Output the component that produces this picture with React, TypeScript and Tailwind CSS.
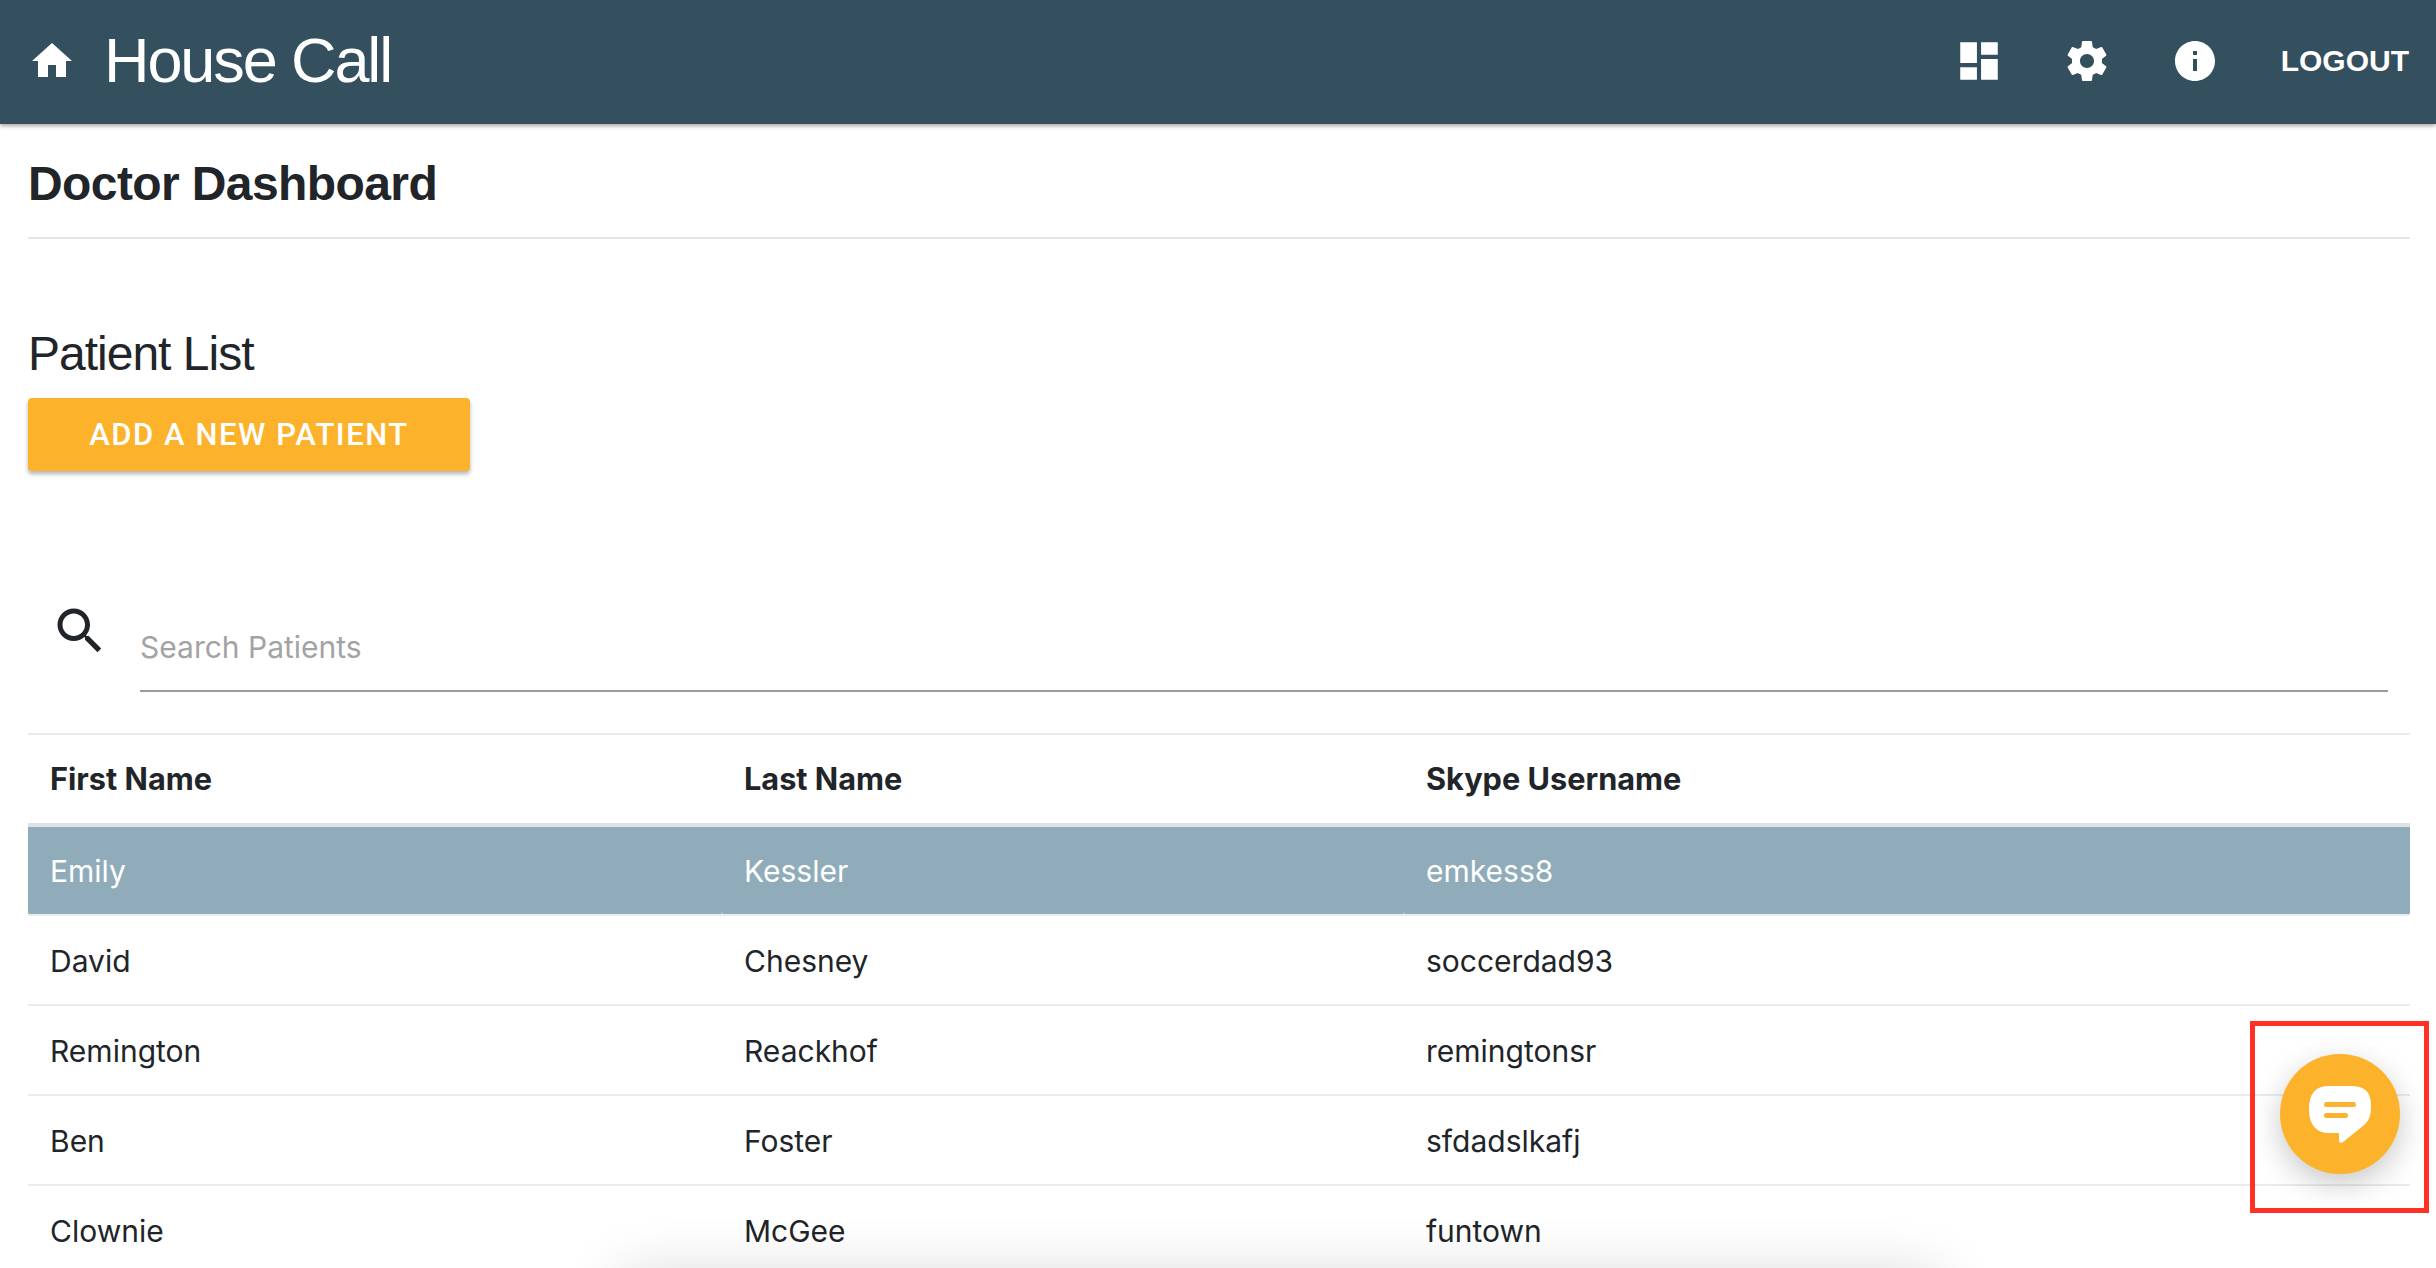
import React from 'react';

const patients = [
  { first: 'Emily', last: 'Kessler', skype: 'emkess8', selected: true },
  { first: 'David', last: 'Chesney', skype: 'soccerdad93' },
  { first: 'Remington', last: 'Reackhof', skype: 'remingtonsr' },
  { first: 'Ben', last: 'Foster', skype: 'sfdadslkafj' },
  { first: 'Clownie', last: 'McGee', skype: 'funtown' },
];

const App: React.FC = () => {
  return (
    <div className="relative h-[1268px] overflow-hidden bg-white font-['Liberation_Sans',sans-serif] text-[#212529]">
      <header className="relative z-10 flex h-[124px] items-center bg-[#34505e] pl-[34px] pr-[27px] text-white shadow-[0_2px_4px_rgba(0,0,0,0.35)]">
        <svg viewBox="0 0 24 24" className="ml-[-6px] mb-[2px] h-[48px] w-[48px] fill-white">
          <path d="M10 20v-6h4v6h5v-8h3L12 3 2 12h3v8z" />
        </svg>
        <span className="mb-[3px] ml-[28px] text-[63px] leading-none tracking-[-2.1px]">House Call</span>
        <div className="mb-[2px] ml-auto flex items-center">
          <svg viewBox="0 0 24 24" className="h-[50px] w-[50px] fill-white">
            <path d="M3 13h8V3H3v10zm0 8h8v-6H3v6zm10 0h8V11h-8v10zm0-18v6h8V3h-8z" />
          </svg>
          <svg viewBox="0 0 24 24" className="ml-[59px] h-[48px] w-[48px] fill-white">
            <path d="M19.43 12.98c.04-.32.07-.64.07-.98s-.03-.66-.07-.98l2.11-1.65c.19-.15.24-.42.12-.64l-2-3.46c-.12-.22-.39-.3-.61-.22l-2.49 1c-.52-.4-1.08-.73-1.69-.98l-.38-2.65C14.46 2.18 14.25 2 14 2h-4c-.25 0-.46.18-.49.42l-.38 2.65c-.61.25-1.17.59-1.69.98l-2.49-1c-.23-.09-.49 0-.61.22l-2 3.46c-.13.22-.07.49.12.64l2.11 1.65c-.04.32-.07.65-.07.98s.03.66.07.98l-2.11 1.65c-.19.15-.24.42-.12.64l2 3.46c.12.22.39.3.61.22l2.49-1c.52.4 1.08.73 1.69.98l.38 2.65c.03.24.24.42.49.42h4c.25 0 .46-.18.49-.42l.38-2.65c.61-.25 1.17-.59 1.69-.98l2.49 1c.23.09.49 0 .61-.22l2-3.46c.12-.22.07-.49-.12-.64l-2.11-1.65zM12 15.5c-1.93 0-3.5-1.57-3.5-3.5s1.57-3.5 3.5-3.5 3.5 1.57 3.5 3.5-1.57 3.5-3.5 3.5z" />
          </svg>
          <svg viewBox="0 0 24 24" className="ml-[60px] h-[48px] w-[48px] fill-white">
            <path d="M12 2C6.48 2 2 6.48 2 12s4.48 10 10 10 10-4.48 10-10S17.52 2 12 2zm1 15h-2v-6h2v6zm0-8h-2V7h2v2z" />
          </svg>
          <span className="ml-[62px] text-[30px] font-bold leading-none">LOGOUT</span>
        </div>
      </header>

      <main className="pl-[28px] pr-[26px]">
        <h1 className="flex h-[115px] items-center border-b-2 border-[#e5e5e5] pt-[6px] text-[48px] font-bold tracking-[-0.6px]">
          Doctor Dashboard
        </h1>
        <h2 className="mt-[87px] text-[48px] leading-[56px] tracking-[-1px]">Patient List</h2>
        <button className="mt-[16px] block h-[73px] w-[442px] rounded-[4px] bg-[#fdb22c] pt-[2px] font-['Roboto',sans-serif] text-[31px] font-medium tracking-[1.55px] text-white shadow-[0_3px_4px_rgba(0,0,0,0.3)]">
          ADD A NEW PATIENT
        </button>

        <div className="mt-[131px] flex h-[133px] items-start border-b-2 border-[#e9ecef] px-[22px]">
          <svg viewBox="0 0 24 24" className="mt-[-1px] h-[60px] w-[60px] shrink-0 fill-[#212529]">
            <path d="M15.5 14h-.79l-.28-.27C15.41 12.59 16 11.11 16 9.5 16 5.91 13.09 3 9.5 3S3 5.91 3 9.5 5.91 16 9.5 16c1.61 0 3.09-.59 4.23-1.57l.27.28v.79l5 4.99L20.49 19l-4.99-5zm-6 0C7.01 14 5 11.99 5 9.5S7.01 5 9.5 5 14 7.01 14 9.5 11.99 14 9.5 14z" />
          </svg>
          <div className="ml-[30px] mt-[20px] flex h-[70px] flex-1 items-center border-b-2 border-[#9a9a9a] pb-[18px] text-[#a3a3a3]">
            <span className="font-['Inter',sans-serif] text-[30px]">Search Patients</span>
          </div>
        </div>

        <table className="w-full table-fixed border-collapse font-['Inter',sans-serif] text-[30px]">
          <thead>
            <tr className="h-[90px] border-b-4 border-[#dee2e6] text-[30.7px]">
              <th className="w-[694px] pl-[22px] text-left font-bold">First Name</th>
              <th className="w-[682px] pl-[22px] text-left font-bold">Last Name</th>
              <th className="pl-[22px] text-left font-bold">Skype Username</th>
            </tr>
          </thead>
          <tbody>
            {patients.map((p) => {
              const cell = p.selected ? 'rounded-[3px] bg-[#90acba] pl-[22px] pt-[2px] text-white' : 'pl-[22px] pt-[2px]';
              return (
                <tr key={p.first} className="h-[90px] border-b-2 border-[#e9ecef]">
                  <td className={cell}>{p.first}</td>
                  <td className={cell}>{p.last}</td>
                  <td className={cell}>{p.skype}</td>
                </tr>
              );
            })}
          </tbody>
        </table>
      </main>

      {/* chat bubble */}
      <div className="absolute left-[2280px] top-[1054px] flex h-[120px] w-[120px] items-center justify-center rounded-full bg-[#fdb22c] shadow-[0_10px_30px_rgba(0,0,0,0.22)]">
        <svg viewBox="0 0 62 60" className="mt-[3px] h-[60px] w-[62px]">
          <path
            d="M20 0h22c14 0 20 6 20 20 0 10-2 15-8 20L34 56c-2 1.5-4 1-4-2V47H20C6 47 0 37 0 23 0 8 6 0 20 0z"
            fill="#fff"
          />
          <rect x="15" y="16" width="32" height="5" rx="2.5" fill="#fdb22c" />
          <rect x="15" y="27" width="24" height="5" rx="2.5" fill="#fdb22c" />
        </svg>
      </div>
      <div className="absolute left-[2250px] top-[1021px] h-[192px] w-[179px] border-[5px] border-[#ff3124]" />

      {/* shadow of a panel just below the fold */}
      <div className="absolute left-[620px] top-[1278px] h-[40px] w-[1320px] shadow-[0_0_60px_rgba(0,0,0,0.2)]" />
    </div>
  );
};

export default App;
